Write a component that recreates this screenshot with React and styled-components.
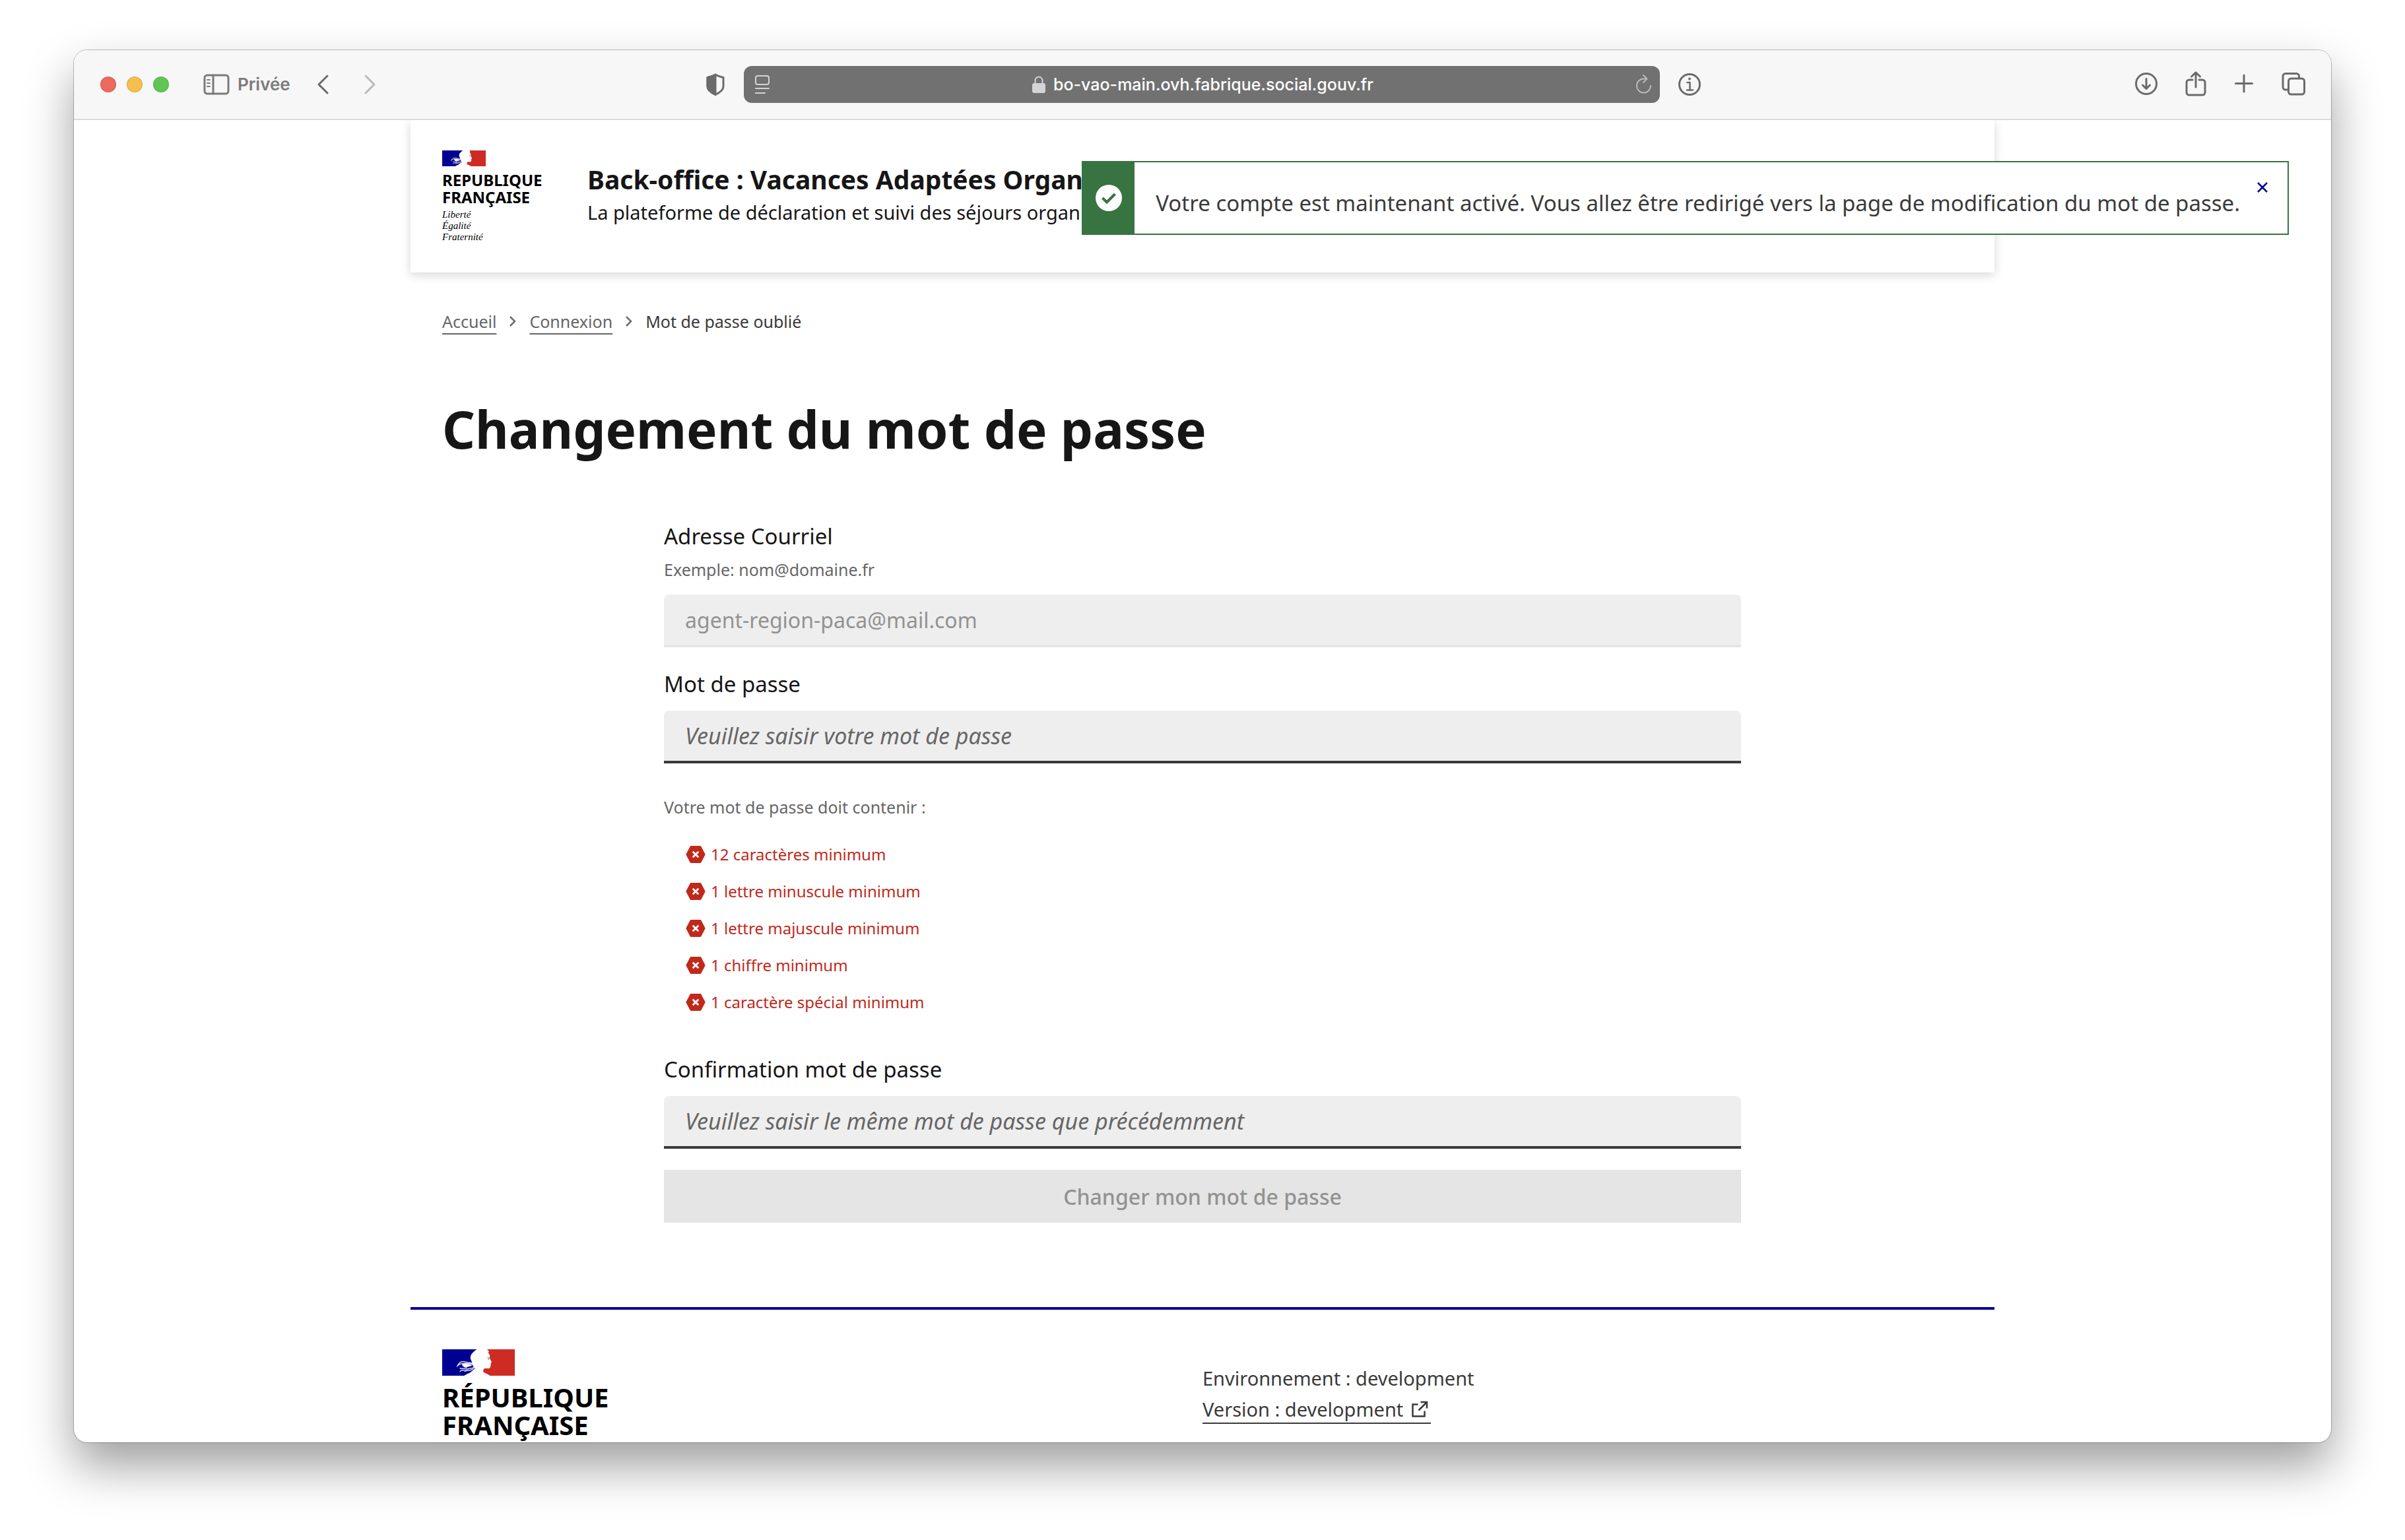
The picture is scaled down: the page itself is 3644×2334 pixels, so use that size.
import React from "react";
import styled, { createGlobalStyle } from "styled-components";

const blue = "#000091";
const green = "#377442";
const grey = "#6b6b6b";
const sans = `"Noto Sans", "DejaVu Sans", sans-serif`;
const system = `Inter, "Liberation Sans", sans-serif`;

const GlobalStyle = createGlobalStyle`
  *, *::before, *::after { box-sizing: border-box; }
  body {
    margin: 0;
    background: #fff;
    color: #161616;
    font-family: ${sans};
  }
  h1, p, ul, ol { margin: 0; padding: 0; }
  ul, ol { list-style: none; }
  button, input { font: inherit; color: inherit; }
  button { border: 0; padding: 0; background: none; cursor: pointer; }
  svg { display: block; }
`;

/* ---------- Window ---------- */

const Desktop = styled.div`
  height: 100vh;
  padding: 76px 112px 148px;
`;

const Window = styled.div`
  height: 100%;
  display: flex;
  flex-direction: column;
  overflow: hidden;
  border-radius: 20px;
  background: #fff;
  box-shadow: 0 0 0 1px rgba(0, 0, 0, 0.24), 0 36px 72px rgba(0, 0, 0, 0.38);
`;

const Toolbar = styled.div`
  flex: none;
  display: grid;
  grid-template-columns: 1fr minmax(0, 1512px) 1fr;
  align-items: center;
  height: 106px;
  border-bottom: 2px solid #dadada;
  background: #f7f7f7;
  color: ${grey};
  font-family: ${system};
`;

const ToolGroup = styled.div`
  display: flex;
  align-items: center;
  justify-content: ${(p) => (p.$end ? "flex-end" : "flex-start")};
  gap: ${(p) => p.$gap}px;
  padding: 0 37px 0 40px;
`;

const Lights = styled.div`
  display: flex;
  gap: 16px;
  margin-right: 14px;
`;

const Light = styled.span`
  width: 24px;
  height: 24px;
  border-radius: 50%;
  border: 1px solid rgba(0, 0, 0, 0.12);
  background: ${(p) => p.$color};
`;

const SidebarButton = styled.button`
  display: flex;
  align-items: center;
  gap: 12px;
  color: #7a7a7a;
  font-size: 26px;
  font-weight: 600;
  line-height: 40px;
`;

const ToolButton = styled.button`
  color: ${(p) => (p.disabled ? "#b9b9b9" : grey)};
`;

const AddressGroup = styled.div`
  display: flex;
  align-items: center;
  gap: 27px;
`;

const AddressBar = styled.div`
  flex: 1;
  display: flex;
  align-items: center;
  justify-content: space-between;
  height: 56px;
  padding: 0 10px 0 15px;
  border-radius: 12px;
  background: #717171;
  color: #d4d4d4;
`;

const Address = styled.label`
  display: flex;
  align-items: center;
  gap: 12px;
`;

const AddressInput = styled.input`
  field-sizing: content;
  border: 0;
  padding: 0;
  outline: 0;
  background: none;
  color: #fff;
  font-size: 25px;
  font-weight: 500;
  line-height: 40px;
`;

const Viewport = styled.div`
  position: relative;
  flex: 1;
  min-height: 0;
  overflow: hidden;
`;

const Container = styled.div`
  max-width: 2400px;
  margin: 0 auto;
`;

/* ---------- Header ---------- */

const Header = styled.header`
  display: flex;
  gap: 62px;
  padding: 46px 48px 45px;
  box-shadow: 0 4px 14px rgba(0, 0, 18, 0.16);
`;

const LogoBlock = styled.div`
  flex: 0 0 158px;
  color: #000;
`;

const LogoName = styled.p`
  margin-top: ${(p) => (p.$large ? 12 : 8)}px;
  font-size: ${(p) => (p.$large ? 40 : 24)}px;
  line-height: ${(p) => (p.$large ? 42 : 26)}px;
  font-weight: 700;
`;

const Motto = styled.p`
  margin-top: 5px;
  font-family: "Liberation Serif", serif;
  font-style: italic;
  font-size: 15px;
  line-height: 17px;
`;

const Service = styled.div`
  min-width: 0;
  padding-top: 18px;
`;

const ServiceTitle = styled.p`
  font-size: 39px;
  font-weight: 700;
  line-height: 52px;
`;

const ServiceTagline = styled.p`
  font-size: 29px;
  line-height: 48px;
`;

/* ---------- Notification ---------- */

const Toast = styled.div`
  position: absolute;
  top: 62px;
  right: 64px;
  display: flex;
  border: 2px solid ${green};
  background: #fff;
  color: #3a3a3a;
`;

const ToastIcon = styled.span`
  display: flex;
  align-items: center;
  justify-content: center;
  width: 78px;
  background: ${green};
`;

const ToastText = styled.p`
  padding: 38px 10px 22px 32px;
  font-size: 33px;
  line-height: 48px;
  white-space: nowrap;
`;

const ToastClose = styled.button`
  display: flex;
  align-items: center;
  justify-content: center;
  width: 48px;
  height: 48px;
  margin: 14px 14px 0 0;
  color: ${blue};
`;

/* ---------- Main ---------- */

const Main = styled.main`
  padding: 54px 48px 128px;
`;

const Crumbs = styled.ol`
  display: flex;
  align-items: center;
  gap: 19px;
  font-size: 25px;
  line-height: 40px;
  color: #3a3a3a;
`;

const Crumb = styled.li`
  display: flex;
  align-items: center;
  gap: 19px;
`;

const CrumbLink = styled.a`
  color: #666;
  text-decoration: underline 2px;
  text-underline-offset: 8px;
`;

const Title = styled.h1`
  margin: 95px 0 91px;
  font-size: 78px;
  font-weight: 700;
  line-height: 96px;
`;

const Form = styled.form`
  display: flex;
  flex-direction: column;
  gap: 32px;
  max-width: 1632px;
  margin: 0 auto;
`;

const Field = styled.div`
  display: flex;
  flex-direction: column;
`;

const Label = styled.label`
  font-size: 33px;
  line-height: 48px;
`;

const Hint = styled.p`
  margin-top: ${(p) => p.$top}px;
  font-size: 25px;
  line-height: 40px;
  color: #666;
`;

const Input = styled.input`
  height: 80px;
  margin-top: ${(p) => (p.$hinted ? 18 : 16)}px;
  padding: 0 32px;
  border: 0;
  border-bottom: 4px solid #3a3a3a;
  border-radius: 8px 8px 0 0;
  outline: 0;
  background: #eee;
  font-size: 32px;

  &::placeholder {
    color: #666;
    opacity: 1;
    font-size: 34px;
    font-style: italic;
  }

  &:disabled {
    border-bottom-color: #e5e5e5;
    color: #929292;
  }
`;

const Rules = styled.ul`
  margin: 24px 0 18px;
  padding: 0 32px;
`;

const Rule = styled.li`
  display: flex;
  align-items: center;
  gap: 8px;
  font-size: 24px;
  line-height: 56px;
  color: #c0291b;
`;

const Submit = styled.button`
  height: 80px;
  background: #e5e5e5;
  color: #929292;
  font-size: 32px;
  font-weight: 500;
`;

/* ---------- Footer ---------- */

const Footer = styled.footer`
  display: grid;
  grid-template-columns: 1fr 1fr;
  padding: 60px 48px;
  border-top: 4px solid ${blue};
`;

const BuildInfo = styled.div`
  display: flex;
  flex-direction: column;
  align-items: flex-start;
  padding-top: 20px;
  font-size: 29px;
  line-height: 48px;
  color: #3a3a3a;
`;

const VersionLink = styled.a`
  display: flex;
  align-items: center;
  gap: 12px;
  margin-top: 3px;
  padding-right: 4px;
  border-bottom: 2px solid #3a3a3a;
  color: inherit;
  line-height: 40px;
  text-decoration: none;
`;

/* ---------- Drawings ---------- */

const Line = ({ w, h, sw = 3, children }) => (
  <svg width={w} height={h} viewBox={`0 0 ${w} ${h}`} fill="none" stroke="currentColor" strokeWidth={sw} strokeLinecap="round" strokeLinejoin="round" aria-hidden="true">
    {children}
  </svg>
);

const Marianne = ({ width, height }) => (
  <svg width={width} height={height} viewBox="0 0 110 40" aria-hidden="true">
    <path fill="#fff" d="M30 0h50v40H30z" />
    <path fill={blue} d="M0 0H52.5C49 2 46 5 44 8C42 11 42.5 15 44.5 18C46 20 45.5 23 47 26C48 28 49 28.5 50 28.5C47 32 44 34 41 36C37 37.5 35 39 33 40H0Z" />
    <path fill="#ce2b24" d="M110 0H68C69 1.5 70.5 2 71 3.5C70 4 69.5 5 70.5 6.5C72 8 72.5 9.5 72 11C71.8 13.5 73 15.5 75 19.5C75 20.5 73.8 20.5 73.5 21.5C74 22.5 73.5 23.5 73.5 24.5C73 26.5 73 28.5 70.5 29C68 29 65 28 63.5 29.5C62 31 61.8 33.5 63 35C66 36.5 69.5 37.5 72.5 40H110Z" />
    <g fill="none" stroke="#fff" strokeWidth="1.3" strokeLinecap="round" strokeLinejoin="round">
      <path d="M22.5 26C24.5 22 27 18.8 31 18.6C35 18.5 38 20.8 46 21" />
      <path d="M24.5 24C28 21 34 20.5 46 22.5" />
      <path d="M27 28.5C29 30.5 34 28 37 28.5M27 33.5C29 30 32 33 36 31C40 28.5 44 29 48.5 28" />
      <path d="M34 33.5C37 31.5 40 33.5 47 30" />
    </g>
    <path fill="#fff" d="M30 22.5C35 21 40 22 46 24.5L36 27.5C33 27 30.5 26 30 22.5Z" />
    <path d="M68.5 13.2h3.5M69.5 15.3l2-.3" fill="none" stroke="#777" strokeWidth="1.2" />
  </svg>
);

const ErrorIcon = () => (
  <svg width="31" height="26" viewBox="0 0 31 26" aria-hidden="true">
    <path d="M9 1.500H23L29 13L23 24.500H9L3 13Z" fill="#c0291b" stroke="#c0291b" strokeWidth="3" strokeLinejoin="round" />
    <path d="M11.700 8.700l8.600 8.600M20.300 8.700l-8.600 8.600" stroke="#fff" strokeWidth="2.800" />
  </svg>
);

const Chevron = () => (
  <svg width="12" height="18" viewBox="0 0 12 18" fill="none" stroke={grey} strokeWidth="2.500" aria-hidden="true">
    <path d="M2 2l7 7-7 7" />
  </svg>
);

/* ---------- Page ---------- */

const rules = [
  "12 caractères minimum",
  "1 lettre minuscule minimum",
  "1 lettre majuscule minimum",
  "1 chiffre minimum",
  "1 caractère spécial minimum",
];

function BrowserToolbar() {
  return (
    <Toolbar>
      <ToolGroup $gap={38}>
        <Lights>
          <Light $color="#ed6a5e" />
          <Light $color="#f5bf4f" />
          <Light $color="#61c554" />
        </Lights>
        <SidebarButton type="button">
          <Line w={40} h={32}>
            <rect x="2" y="2" width="36" height="28" rx="4" />
            <path d="M15 2v28" />
            <path d="M6 9h4M6 14h4M6 19h4" strokeWidth="2" />
          </Line>
          Privée
        </SidebarButton>
        <ToolButton type="button" aria-label="Page précédente">
          <Line w={24} h={32}><path d="M18 3L5 16l13 13" /></Line>
        </ToolButton>
        <ToolButton type="button" aria-label="Page suivante" disabled>
          <Line w={32} h={32}><path d="M14 3l13 13-13 13" /></Line>
        </ToolButton>
      </ToolGroup>

      <AddressGroup>
        <ToolButton type="button" aria-label="Rapport de confidentialité">
          <Line w={34} h={36}>
            <path d="M18 3c4 2.500 8 3.500 12 4.500v14c0 5-6 9-12 12c-6-3-12-7-12-12v-14c4-1 8-2 12-4.500z" />
            <path d="M18 3v30.500c-6-3-12-7-12-12v-14c4-1 8-2 12-4.500z" fill="currentColor" />
          </Line>
        </ToolButton>
        <AddressBar>
          <Line w={26} h={32} sw={2}>
            <rect x="3" y="3" width="20" height="13" rx="3" />
            <path d="M3 22h20M3 29h14" />
          </Line>
          <Address aria-label="Adresse du site">
            <svg width="20" height="26" viewBox="0 0 20 26" aria-hidden="true">
              <rect x="0" y="11" width="20" height="15" rx="3" fill="currentColor" />
              <path d="M4.500 12V7a5.500 5.500 0 0 1 11 0v5" fill="none" stroke="currentColor" strokeWidth="2" />
            </svg>
            <AddressInput type="text" readOnly value="bo-vao-main.ovh.fabrique.social.gouv.fr" />
          </Address>
          <ToolButton type="button" aria-label="Recharger" disabled>
            <Line w={28} h={32} sw={2}>
              <path d="M24 18a10.500 10.500 0 1 1-10.500-10.500h4" />
              <path d="M13 2l5.500 5.500L13 13" />
            </Line>
          </ToolButton>
        </AddressBar>
        <ToolButton type="button" aria-label="Informations">
          <Line w={36} h={36}>
            <circle cx="18" cy="18" r="15.500" />
            <path d="M14.500 15h4v11M14 26.500h9" strokeWidth="2.600" />
            <circle cx="18" cy="9.500" r="1.200" fill="currentColor" strokeWidth="1.500" />
          </Line>
        </ToolButton>
      </AddressGroup>

      <ToolGroup $gap={34} $end>
        <ToolButton type="button" aria-label="Téléchargements">
          <Line w={40} h={40}>
            <circle cx="19" cy="19" r="15.500" />
            <path d="M19 11.500v15M13.500 21l5.500 5.500 5.500-5.500" />
          </Line>
        </ToolButton>
        <ToolButton type="button" aria-label="Partager">
          <Line w={40} h={40}>
            <path d="M15 13h-5a4 4 0 0 0-4 4v15a4 4 0 0 0 4 4h20a4 4 0 0 0 4-4v-15a4 4 0 0 0-4-4h-5" />
            <path d="M20 24V2M13.500 8L20 1.800 26.500 8" />
          </Line>
        </ToolButton>
        <ToolButton type="button" aria-label="Nouvel onglet">
          <Line w={40} h={40}><path d="M19 6v25M6.500 18.500h25" /></Line>
        </ToolButton>
        <ToolButton type="button" aria-label="Afficher les onglets">
          <Line w={40} h={40}>
            <rect x="12.500" y="11" width="24" height="24" rx="4" />
            <path d="M12 28h-4a4 4 0 0 1-4-4V7.500a4 4 0 0 1 4-4h16.500a4 4 0 0 1 4 4v3" />
          </Line>
        </ToolButton>
      </ToolGroup>
    </Toolbar>
  );
}

export default function App() {
  return (
    <Desktop>
      <GlobalStyle />
      <Window>
        <BrowserToolbar />
        <Viewport>
          <Container>
            <Header>
              <LogoBlock>
                <Marianne width={66} height={24} />
                <LogoName>REPUBLIQUE<br />FRANÇAISE</LogoName>
                <Motto>Liberté<br />Égalité<br />Fraternité</Motto>
              </LogoBlock>
              <Service>
                <ServiceTitle>Back-office : Vacances Adaptées Organisées</ServiceTitle>
                <ServiceTagline>La plateforme de déclaration et suivi des séjours organisés</ServiceTagline>
              </Service>
            </Header>

            <Main>
              <nav aria-label="Fil d’Ariane">
                <Crumbs>
                  <Crumb><CrumbLink href="#accueil">Accueil</CrumbLink><Chevron /></Crumb>
                  <Crumb><CrumbLink href="#connexion">Connexion</CrumbLink><Chevron /></Crumb>
                  <Crumb aria-current="page">Mot de passe oublié</Crumb>
                </Crumbs>
              </nav>

              <Title>Changement du mot de passe</Title>

              <Form onSubmit={(event) => event.preventDefault()}>
                <Field>
                  <Label htmlFor="email">Adresse Courriel</Label>
                  <Hint id="email-hint" $top={6}>Exemple: nom@domaine.fr</Hint>
                  <Input id="email" type="email" $hinted aria-describedby="email-hint" defaultValue="agent-region-paca@mail.com" disabled />
                </Field>

                <Field>
                  <Label htmlFor="password">Mot de passe</Label>
                  <Input id="password" type="password" aria-describedby="password-hint" placeholder="Veuillez saisir votre mot de passe" />
                  <Hint id="password-hint" $top={46}>Votre mot de passe doit contenir :</Hint>
                  <Rules>
                    {rules.map((rule) => (
                      <Rule key={rule}><ErrorIcon />{rule}</Rule>
                    ))}
                  </Rules>
                </Field>

                <Field>
                  <Label htmlFor="confirmation">Confirmation mot de passe</Label>
                  <Input id="confirmation" type="password" placeholder="Veuillez saisir le même mot de passe que précédemment" />
                </Field>

                <Submit type="submit" disabled>Changer mon mot de passe</Submit>
              </Form>
            </Main>

            <Footer>
              <LogoBlock>
                <Marianne width={110} height={40} />
                <LogoName $large>RÉPUBLIQUE<br />FRANÇAISE</LogoName>
              </LogoBlock>
              <BuildInfo>
                <p>Environnement : development</p>
                <VersionLink href="#version">
                  Version : development
                  <svg width="26" height="26" viewBox="0 0 26 26" fill="none" stroke="currentColor" strokeWidth="2.500" aria-hidden="true">
                    <path d="M10.500 5.500H2.500v18h18v-8M14.500 2h9.500v9.500M24 2L11.500 14.500" />
                  </svg>
                </VersionLink>
              </BuildInfo>
            </Footer>
          </Container>

          <Toast role="status">
            <ToastIcon>
              <svg width="40" height="40" viewBox="0 0 40 40" aria-hidden="true">
                <circle cx="20" cy="20" r="20" fill="#fff" />
                <path d="M10.500 20l6.500 6.500L29.500 14" fill="none" stroke={green} strokeWidth="4" />
              </svg>
            </ToastIcon>
            <ToastText>Votre compte est maintenant activé. Vous allez être redirigé vers la page de modification du mot de passe.</ToastText>
            <ToastClose type="button" aria-label="Fermer">
              <svg width="18" height="18" viewBox="0 0 18 18" stroke="currentColor" strokeWidth="2.500" aria-hidden="true">
                <path d="M2 2l14 14M16 2L2 16" />
              </svg>
            </ToastClose>
          </Toast>
        </Viewport>
      </Window>
    </Desktop>
  );
}
